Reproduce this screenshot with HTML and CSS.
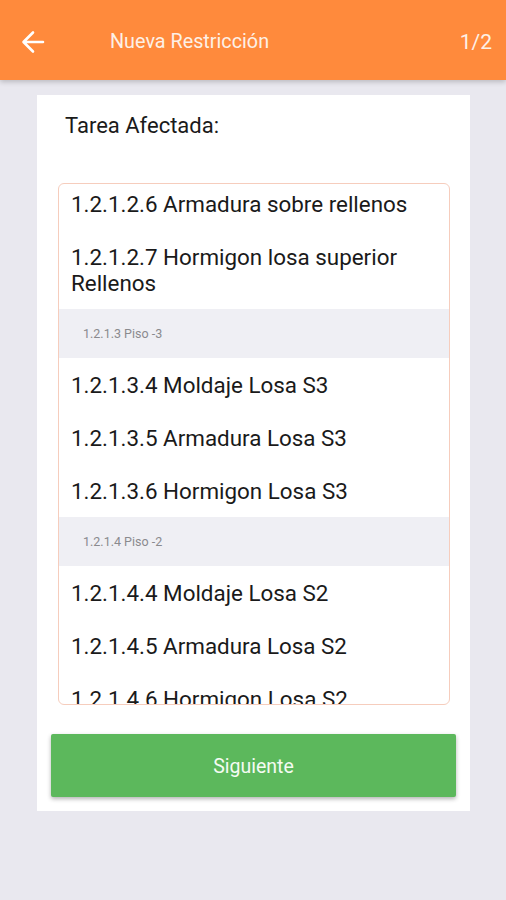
FILE: index.html
```html
<!DOCTYPE html>
<html lang="es">
<head>
  <meta charset="UTF-8" />
  <meta name="viewport" content="width=device-width, initial-scale=1.0"/>
  <title>Nueva Restricción</title>
  <link rel="stylesheet" href="styles.css">
</head>
<body>

  <div class="topbar">
    <svg class="back" width="24" height="24" viewBox="0 0 24 24">
      <path d="M22 12H3M12 2.5L2.5 12l9.5 9.5" fill="none" stroke="#fff" stroke-width="2.6" stroke-linecap="round" stroke-linejoin="round"/>
    </svg>
    <div class="title">Nueva Restricción</div>
    <div class="step">1/2</div>
  </div>

  <div class="card">
    <div class="label">Tarea Afectada:</div>

    <div class="picker">
      <div class="picker-inner">
        <div class="item">1.2.1.2.6 Armadura sobre rellenos</div>
        <div class="item">1.2.1.2.7 Hormigon losa superior Rellenos</div>
        <div class="group">1.2.1.3 Piso -3</div>
        <div class="item">1.2.1.3.4 Moldaje Losa S3</div>
        <div class="item">1.2.1.3.5 Armadura Losa S3</div>
        <div class="item">1.2.1.3.6 Hormigon Losa S3</div>
        <div class="group">1.2.1.4 Piso -2</div>
        <div class="item">1.2.1.4.4 Moldaje Losa S2</div>
        <div class="item">1.2.1.4.5 Armadura Losa S2</div>
        <div class="item">1.2.1.4.6 Hormigon Losa S2</div>
      </div>
    </div>

    <button class="next">Siguiente</button>
  </div>

</body>
</html>
```

FILE: styles.css
```css
body {
  margin: 0;
  background: #e9e8ef;
  font-family: Roboto, "Liberation Sans", sans-serif;
  color: #1a1a1a;
}

.topbar {
  height: 80px;
  background: #ff8a3c;
  display: flex;
  align-items: center;
  padding: 0 14px 0 21px;
  box-shadow: 0 2px 5px rgba(0, 0, 0, 0.2);
  color: #fff;
}

.back {
  display: block;
  margin-top: 4px;
}

.title {
  margin: 3px 0 0 65px;
  font-size: 19.8px;
  color: #fdf0e6;
  flex: 1;
}

.step {
  margin-top: 3px;
  font-size: 21px;
  color: #fdf0e6;
}

.card {
  width: 433px;
  margin: 15px 0 0 37px;
  background: #fff;
  padding: 16px 0 14px;
}

.label {
  font-size: 22px;
  margin-left: 28px;
  line-height: 30px;
}

.picker {
  margin: 42px 20px 0 21px;
  height: 520px;
  border: 1px solid #f6cdbd;
  border-radius: 6px;
  overflow: hidden;
}

.picker-inner {
  margin-top: -7px;
}

.item {
  font-size: 22.4px;
  line-height: 26px;
  padding: 13.5px 12px;
}

.group {
  background: #efeff4;
  height: 49px;
  line-height: 49px;
  padding-left: 24px;
  font-size: 12.5px;
  color: #8a8a8e;
}

.next {
  display: block;
  width: 405px;
  height: 63px;
  margin: 29px 0 0 14px;
  padding-top: 3px;
  border: none;
  border-radius: 2px;
  background: #5cb85c;
  color: #f4fbf2;
  font-family: Roboto, "Liberation Sans", sans-serif;
  font-size: 19.5px;
  box-shadow: 0 2px 4px rgba(0, 0, 0, 0.3);
}
```
